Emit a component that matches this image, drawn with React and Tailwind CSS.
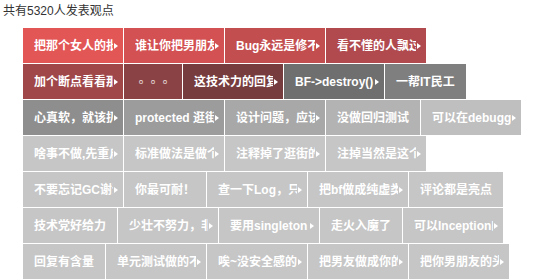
import React from 'react';

// each row of opinion tiles; cut = text is truncated with a little arrow
const rows = [
  [
    { t: '把那个女人的批评留着', c: 'bg-[#e35656]', cut: true },
    { t: '谁让你把男朋友做成', c: 'bg-[#d35152]', cut: true },
    { t: 'Bug永远是修不完的', c: 'bg-[#c34e50]', cut: true },
    { t: '看不懂的人飘过吧', c: 'bg-[#b04a4e]', cut: true },
  ],
  [
    { t: '加个断点看看那女人', c: 'bg-[#a0474a]', cut: true },
    { t: '。。。', c: 'bg-[#8b4244]', dots: true },
    { t: '这技术力的回复真好', c: 'bg-[#773c3e]', cut: true },
    { t: 'BF->destroy()', c: 'bg-[#6f6f6f]', cut: true },
    { t: '一帮IT民工', c: 'bg-[#7f7f7f]' },
  ],
  [
    { t: '心真软，就该扔了', c: 'bg-[#8e8e8e]', cut: true },
    { t: 'protected 逛街', c: 'bg-[#9c9c9c]', cut: true },
    { t: '设计问题，应该重构', c: 'bg-[#a8a8a8]', cut: true },
    { t: '没做回归测试', c: 'bg-[#b3b3b3]' },
    { t: '可以在debugger里', c: 'bg-[#bfbfbf]', cut: true },
  ],
  [
    { t: '啥事不做,先重启', c: 'bg-[#c6c6c6]', cut: true },
    { t: '标准做法是做个接口', c: 'bg-[#c6c6c6]', cut: true },
    { t: '注释掉了逛街的代码', c: 'bg-[#c6c6c6]', cut: true },
    { t: '注掉当然是这个结果', c: 'bg-[#c6c6c6]', cut: true },
  ],
  [
    { t: '不要忘记GC谢谢', c: 'bg-[#c6c6c6]', cut: true },
    { t: '你最可耐！', c: 'bg-[#c6c6c6]' },
    { t: '查一下Log，只有', c: 'bg-[#c6c6c6]', cut: true },
    { t: '把bf做成纯虚类', c: 'bg-[#c6c6c6]', cut: true },
    { t: '评论都是亮点', c: 'bg-[#c6c6c6]' },
  ],
  [
    { t: '技术党好给力', c: 'bg-[#c6c6c6]' },
    { t: '少壮不努力，非要', c: 'bg-[#c6c6c6]', cut: true },
    { t: '要用singleton', c: 'bg-[#c6c6c6]', cut: true },
    { t: '走火入魔了', c: 'bg-[#c6c6c6]' },
    { t: '可以Inception的', c: 'bg-[#c6c6c6]', cut: true },
  ],
  [
    { t: '回复有含量', c: 'bg-[#c6c6c6]' },
    { t: '单元测试做的不够', c: 'bg-[#c6c6c6]', cut: true },
    { t: '唉~没安全感的人', c: 'bg-[#c6c6c6]', cut: true },
    { t: '把男友做成你的', c: 'bg-[#c6c6c6]', cut: true },
    { t: '把你男朋友的头', c: 'bg-[#c6c6c6]', cut: true },
  ],
];

function Tile({ t, c, cut, dots }) {
  if (dots) {
    // TC font centres the full stop, which is how the reference shows it
    return (
      <div className={`${c} h-[35px] w-[58px] flex items-center px-[11px] whitespace-nowrap shrink-0 font-['Noto_Sans_CJK_TC',sans-serif] font-normal text-white/85`}>
        {t}
      </div>
    );
  }
  if (cut) {
    return (
      <div className={`${c} h-[35px] w-[100px] flex items-center pl-[11px] pr-[5px] shrink-0`}>
        <span className="w-[79px] overflow-hidden whitespace-nowrap">{t}</span>
        <span className="ml-[1px] w-0 h-0 border-y-[3.5px] border-y-transparent border-l-[4px] border-l-white" />
      </div>
    );
  }
  return (
    <div className={`${c} h-[35px] flex items-center px-[11px] whitespace-nowrap shrink-0`}>
      {t}
    </div>
  );
}

export default function App() {
  return (
    <div className="w-[539px] h-[280px] bg-white overflow-hidden font-['Liberation_Sans','Noto_Sans_CJK_SC',sans-serif]">
      <div className="pl-[3px] pt-[3px] h-[28px] text-[12px] leading-[16px] text-[#333]">共有5320人发表观点</div>
      <div className="ml-[23px] flex flex-col gap-px text-white text-[12px] font-bold">
        {rows.map((r, i) => (
          <div key={i} className="flex gap-px">
            {r.map((tile, j) => (
              <Tile key={j} {...tile} />
            ))}
          </div>
        ))}
      </div>
    </div>
  );
}
